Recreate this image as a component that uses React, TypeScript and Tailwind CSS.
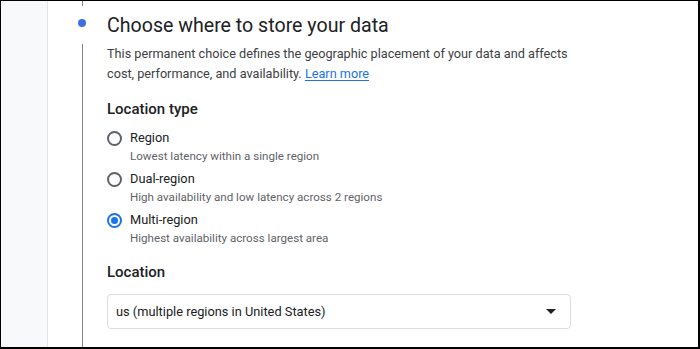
const options = [
  { label: "Region", hint: "Lowest latency within a single region", checked: false },
  { label: "Dual-region", hint: "High availability and low latency across 2 regions", checked: false },
  { label: "Multi-region", hint: "Highest availability across largest area", checked: true },
];

function Radio({ checked }: { checked: boolean }) {
  return (
    <div
      className={`w-[15px] h-[15px] rounded-full border-2 flex items-center justify-center flex-shrink-0 mt-[3px] ${
        checked ? "border-[#1a73e8]" : "border-[#5f6368]"
      }`}
    >
      {checked && <div className="w-[7px] h-[7px] rounded-full bg-[#1a73e8]" />}
    </div>
  );
}

export default function App() {
  return (
    <div
      className="w-[700px] h-[349px] bg-white border-t border-l border-r-2 border-b-2 border-black flex overflow-hidden"
      style={{ fontFamily: "Roboto, 'Liberation Sans', sans-serif" }}
    >
      {/* Side rail */}
      <div className="w-[47px] bg-[#f8f9fa] border-r border-[#e4e5e7] flex-shrink-0" />

      {/* Stepper line */}
      <div className="w-[59px] flex flex-col flex-shrink-0">
        <div className="w-px h-[5px] bg-[#80868b] ml-[34px]" />
        <div className="w-2 h-2 rounded-full bg-[#3f6fe2] ml-[30px] mt-[13px]" />
        <div className="w-px flex-1 bg-[#80868b] ml-[34px] mt-[17px]" />
      </div>

      {/* Step content */}
      <div className="flex-1 pt-[11px]">
        <h2 className="text-[19.6px] leading-[28px] text-[#202124]">
          Choose where to store your data
        </h2>
        <p className="mt-[4px] text-[12.7px] leading-[20px] text-[#3c4043] w-[472px]">
          This permanent choice defines the geographic placement of your data and affects
          cost, performance, and availability.{" "}
          <a className="text-[#1a73e8] underline underline-offset-2">Learn more</a>
        </p>

        <h3 className="mt-[13px] text-[15px] leading-[24px] font-medium text-[#202124]">
          Location type
        </h3>
        <div className="mt-[7px] flex flex-col gap-[5px]">
          {options.map((o) => (
            <div key={o.label} className="flex gap-[8px]">
              <Radio checked={o.checked} />
              <div>
                <div className="text-[12.8px] leading-[20px] text-[#202124]">{o.label}</div>
                <div className="text-[11.6px] leading-[16px] text-[#5f6368]">{o.hint}</div>
              </div>
            </div>
          ))}
        </div>

        <h3 className="mt-[14px] text-[15px] leading-[24px] font-medium text-[#202124]">
          Location
        </h3>
        <div className="mt-[10px] w-[464px] h-[35px] border border-[#dadce0] rounded-[4px] flex items-center justify-between pl-[8px] pr-[14px]">
          <span className="text-[12.8px] text-[#202124]">us (multiple regions in United States)</span>
          <svg width="10" height="5" viewBox="0 0 10 5">
            <path d="M0 0h10L5 5z" fill="#202124" />
          </svg>
        </div>
      </div>
    </div>
  );
}
